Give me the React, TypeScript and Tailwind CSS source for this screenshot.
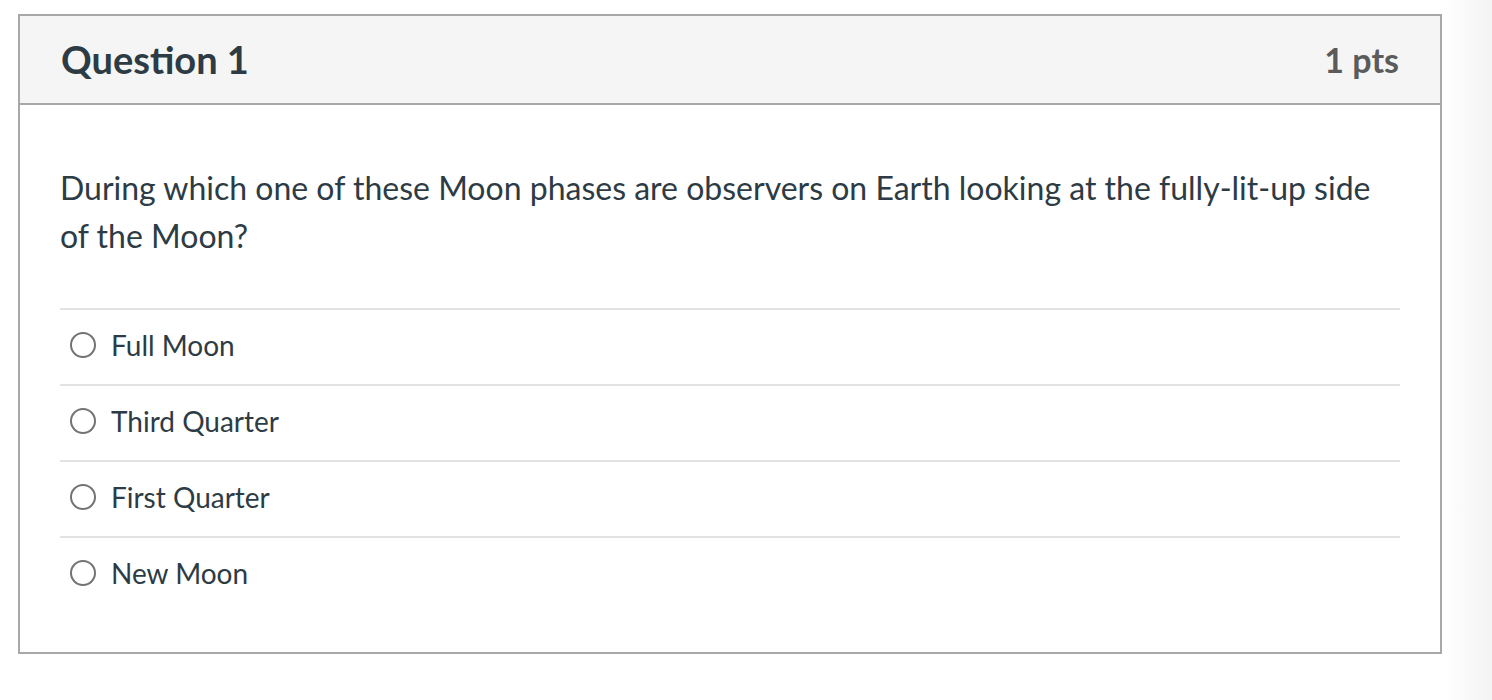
const answers = ['Full Moon', 'Third Quarter', 'First Quarter', 'New Moon'];

export default function App() {
  return (
    <div
      className="flex min-h-[700px] bg-white text-[#2d3b45]"
      style={{ fontFamily: 'Lato, "Open Sans", sans-serif' }}
    >
      <div className="flex-1 pl-[18px] pt-[14px]">
        <div className="w-[1424px] border-2 border-[#a8a8a8]">
          <div className="flex h-[89px] items-center justify-between border-b-2 border-[#a8a8a8] bg-[#f5f5f5] px-[41px]">
            <h2 className="text-[38px] font-bold">Question 1</h2>
            <span className="text-[34px] font-bold text-[#5b5b5b]">1 pts</span>
          </div>
          <div className="px-[40px] pb-[40px] pt-[59px]">
            <p className="text-[32px] leading-[48px]">
              During which one of these Moon phases are observers on Earth looking at the fully-lit-up side of the
              Moon?
            </p>
            <div className="mt-[48px]">
              {answers.map((a) => (
                <div key={a} className="flex h-[76px] items-center border-t-2 border-[#e2e2e2] pb-[4px] pl-[10px]">
                  <span className="h-[26px] w-[26px] rounded-full border-2 border-[#737373]" />
                  <span className="ml-[15px] text-[28px]">{a}</span>
                </div>
              ))}
            </div>
          </div>
        </div>
      </div>
      <div className="w-[48px] bg-gradient-to-r from-white to-[#f3f3f3]" />
    </div>
  );
}
